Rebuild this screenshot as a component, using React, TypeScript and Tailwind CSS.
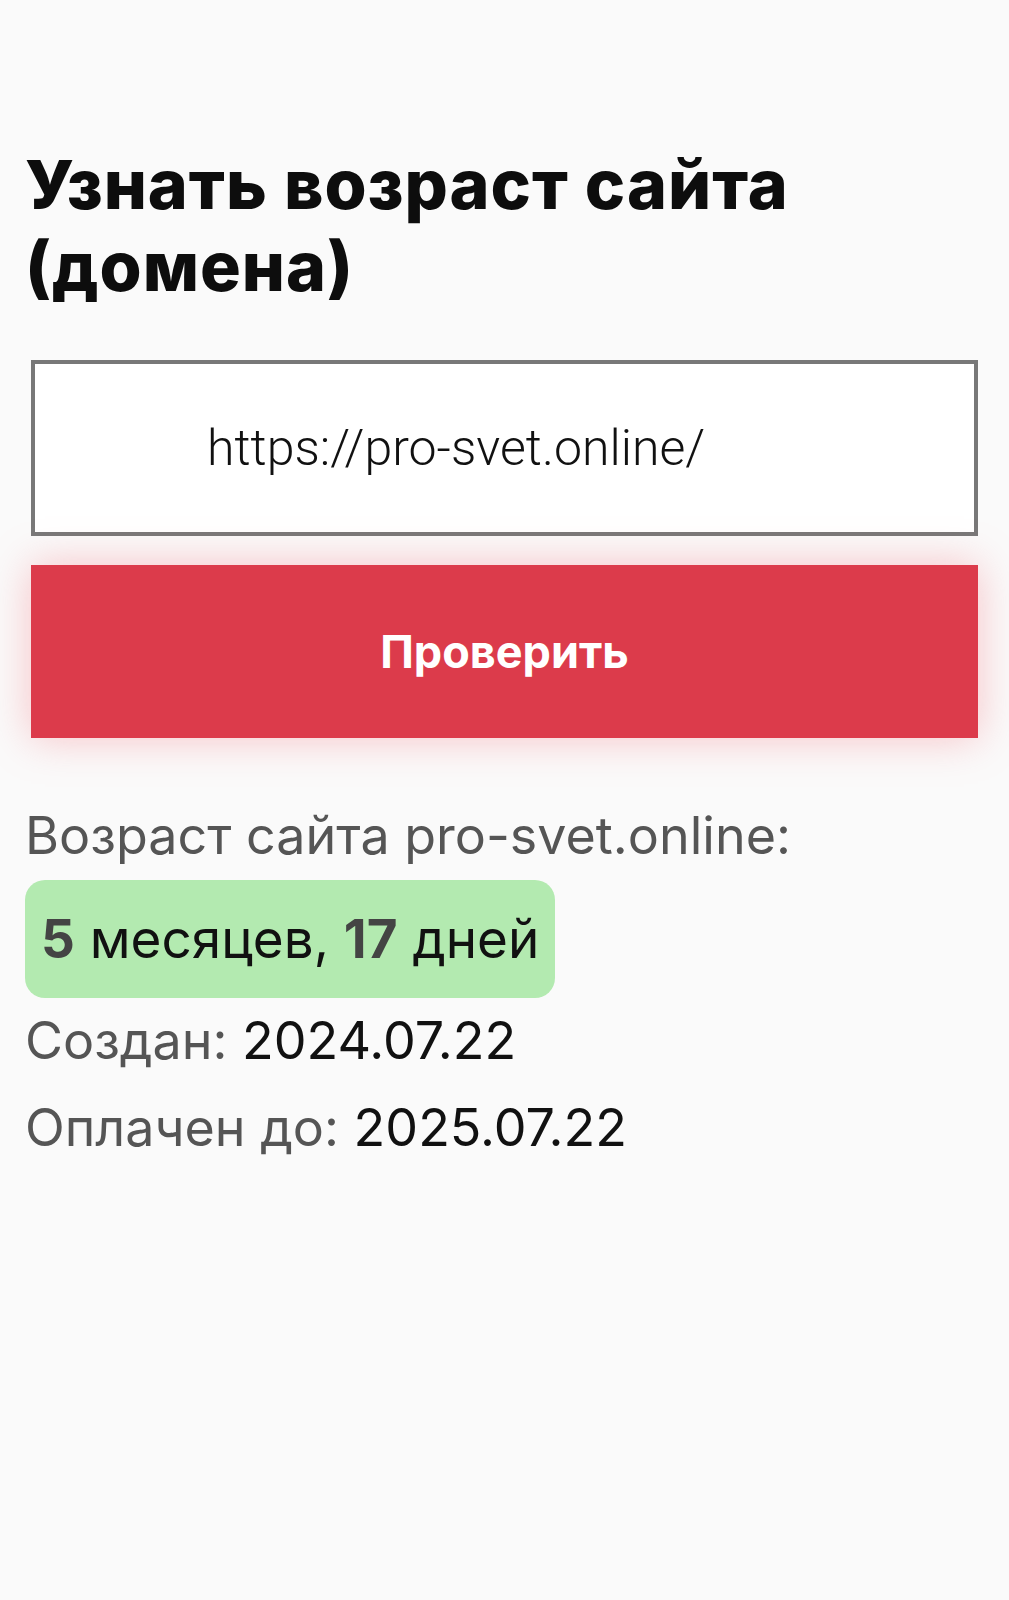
import React, { useState } from 'react';

// Проверка возраста домена — статичная разметка результата
const FONT = { fontFamily: 'Inter, "Open Sans", sans-serif' };

export default function App() {
    const [url, setUrl] = useState('https://pro-svet.online/');

    return (
        <div className="min-h-[1600px] w-full bg-[#fafafa] text-[#111]" style={FONT}>
            <div className="px-[25px] pt-[143px]">
                {/* заголовок */}
                <h1 className="max-w-[860px] text-[68px] leading-[82px] font-extrabold tracking-[1px] text-[#0d0d0d]">
                    Узнать возраст сайта (домена)
                </h1>

                {/* форма */}
                <div className="mt-[53px] flex flex-col gap-[29px] px-[6px]">
                    <input
                        value={url}
                        onChange={e => setUrl(e.target.value)}
                        className="h-[176px] w-full border-[4px] border-[#787878] bg-white pl-[172px] text-[50px] font-light text-[#111] outline-none"
                        style={{ fontFamily: 'Roboto, "Open Sans", sans-serif' }}
                    />
                    <button className="relative h-[173px] w-full bg-[#dc3b4b] text-[45px] font-bold text-white shadow-[0_0_40px_rgba(245,110,120,0.4)]">
                        Проверить
                    </button>
                </div>

                {/* результат */}
                <div className="mt-[66px] flex flex-col items-start">
                    <p className="text-[52px] leading-[64px] text-[#555]">Возраст сайта pro-svet.online:</p>
                    <div className="mt-[12px] rounded-[20px] bg-[#b3eab0] px-[16px] py-[22px] text-[53px] leading-[74px]">
                        <b className="text-[#444]">5</b> месяцев, <b className="text-[#444]">17</b> дней
                    </div>
                    <p className="mt-[3px] text-[52px] leading-[80px] text-[#555]">
                        Создан: <span className="text-[#111]">2024.07.22</span>
                    </p>
                    <p className="text-[52px] leading-[93px] text-[#555]">
                        Оплачен до: <span className="text-[#111]">2025.07.22</span>
                    </p>
                </div>
            </div>
        </div>
    );
}
